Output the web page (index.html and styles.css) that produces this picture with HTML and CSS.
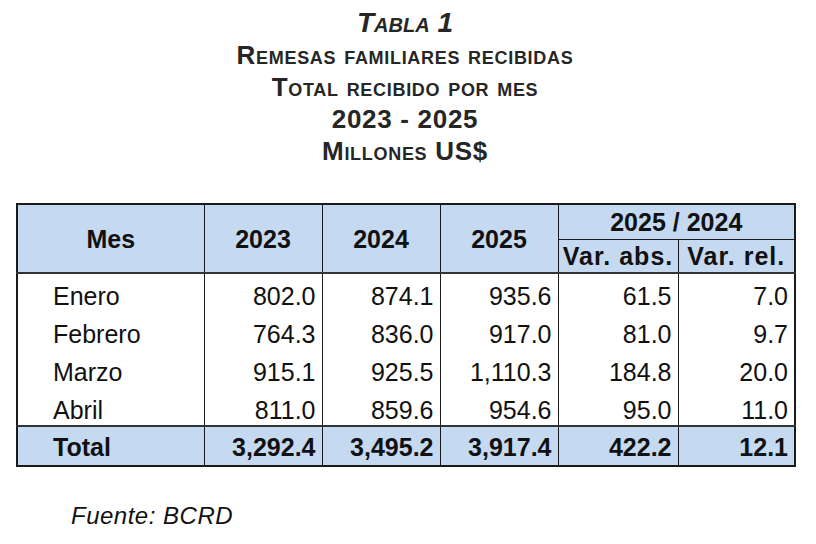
FILE: index.html
```html
<!DOCTYPE html>
<html lang="es">
<head>
<meta charset="utf-8">
<title>Tabla 1 - Remesas familiares recibidas</title>
<link rel="stylesheet" href="styles.css">
</head>
<body>
<div class="page">
  <div class="title">
    <div class="t1">Tabla 1</div>
    <div>Remesas familiares recibidas</div>
    <div>Total recibido por mes</div>
    <div>2023 - 2025</div>
    <div>Millones US$</div>
  </div>
  <table class="data">
    <colgroup>
      <col class="c-mes"><col class="c-y"><col class="c-y"><col class="c-y"><col class="c-va"><col class="c-vr">
    </colgroup>
    <thead>
      <tr class="h1">
        <th rowspan="2">Mes</th>
        <th rowspan="2">2023</th>
        <th rowspan="2">2024</th>
        <th rowspan="2">2025</th>
        <th colspan="2">2025 / 2024</th>
      </tr>
      <tr class="h2">
        <th>Var. abs.</th>
        <th>Var. rel.</th>
      </tr>
    </thead>
    <tbody>
      <tr><td class="m">Enero</td><td>802.0</td><td>874.1</td><td>935.6</td><td>61.5</td><td>7.0</td></tr>
      <tr><td class="m">Febrero</td><td>764.3</td><td>836.0</td><td>917.0</td><td>81.0</td><td>9.7</td></tr>
      <tr><td class="m">Marzo</td><td>915.1</td><td>925.5</td><td>1,110.3</td><td>184.8</td><td>20.0</td></tr>
      <tr><td class="m">Abril</td><td>811.0</td><td>859.6</td><td>954.6</td><td>95.0</td><td>11.0</td></tr>
    </tbody>
    <tfoot>
      <tr class="total"><td class="m">Total</td><td>3,292.4</td><td>3,495.2</td><td>3,917.4</td><td>422.2</td><td>12.1</td></tr>
    </tfoot>
  </table>
  <div class="source">Fuente: BCRD</div>
</div>
</body>
</html>
```
FILE: styles.css
```css
html, body {
  margin: 0;
  padding: 0;
  background: #ffffff;
}
body {
  font-family: "Liberation Sans", Arial, sans-serif;
}
.page {
  width: 778px;
  padding: 7px 0 0 16px;
}
.title {
  text-align: center;
  color: #262626;
  font-weight: bold;
  font-variant: small-caps;
  font-size: 26px;
  letter-spacing: 0.7px;
  line-height: 32px;
}
.title .t1 {
  font-size: 28px;
  font-style: italic;
  letter-spacing: 0;
}
.data {
  margin-top: 36px;
  width: 778px;
  table-layout: fixed;
  border-collapse: collapse;
  border: 2px solid #1a1a1a;
  font-size: 25px;
  color: #111111;
}
.c-mes { width: 187px; }
.c-y { width: 118px; }
.c-va { width: 120px; }
.c-vr { width: 117px; }
.data th {
  background: #c5d9f1;
  font-weight: bold;
  text-align: center;
  vertical-align: middle;
  border: 1px solid #1a1a1a;
  padding: 0;
  line-height: 28px;
}
.data thead tr.h1 th { height: 34px; }
.data thead tr.h2 th {
  height: 32px;
  letter-spacing: 1px;
}
.data thead tr th[rowspan],
.data thead tr.h2 th {
  border-bottom: 2px solid #333333;
}
.data td {
  border-left: 1px solid #1a1a1a;
  border-right: 1px solid #1a1a1a;
  text-align: right;
  padding: 0 6px 0 0;
  vertical-align: bottom;
  line-height: 29px;
  height: 38px;
}
.data tbody tr:first-child td { height: 37px; }
.data td.m {
  text-align: left;
  padding-left: 35px;
}
.data tr.total td {
  background: #c5d9f1;
  font-weight: bold;
  border-top: 2px solid #333333;
  border-left: 1px solid #1a1a1a;
  vertical-align: middle;
  height: 36px;
  padding-top: 2px;
}
.source {
  margin-top: 35px;
  padding-left: 55px;
  font-size: 24px;
  letter-spacing: 0.5px;
  font-style: italic;
  color: #111111;
}
```
